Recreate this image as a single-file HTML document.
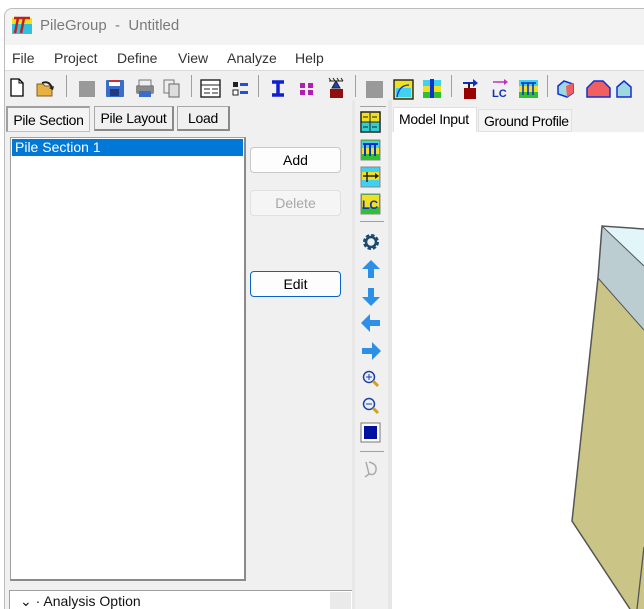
<!DOCTYPE html>
<html><head><meta charset="utf-8"><style>
*{margin:0;padding:0;box-sizing:border-box}
html,body{width:644px;height:609px;overflow:hidden}
body{background:#fff;font-family:"Liberation Sans",Arial,sans-serif;font-size:14px;color:#000;position:relative}
.a{position:absolute;white-space:nowrap}
.win{left:4px;top:8px;width:660px;height:610px;background:#f0f0f0;border:1px solid #bdbdbd;border-bottom:none;border-radius:8px 0 0 0}
.sep{position:absolute;width:1px;height:22px;background:#a0a0a0}
.btn{position:absolute;width:91px;height:26px;background:#fdfdfd;border:1px solid #c8c8c8;border-radius:4px;text-align:center;line-height:24px;font-size:14px}
.tab{position:absolute;height:25px;border:1px solid #a8a8a8;border-right:2px solid #8a8a8a;border-bottom:2px solid #8a8a8a;background:#f0f0f0;font-size:14px;text-align:center;line-height:22px;white-space:nowrap;letter-spacing:-0.3px}
</style></head><body>
<div class="a win"></div>
<div class="a" style="left:5px;top:9px;width:650px;height:36px;background:#f3f3f3;border-radius:8px 0 0 0"></div>
<svg class="a" style="left:12px;top:14px" width="20" height="20" viewBox="0 0 20 20"><rect x="0" y="9" width="20" height="11" fill="#30c0e0"/><rect x="0" y="4" width="20" height="6" fill="#f0e020"/><path d="M2 4h16M6 4l-3 15M12 4l-3 15" stroke="#c02020" stroke-width="2.5" fill="none"/></svg>
<div class="a" style="left:40px;top:17px;font-size:15px;color:#7a7a7a">PileGroup&nbsp; - &nbsp;Untitled</div>
<div class="a" style="left:5px;top:45px;width:650px;height:25px;background:#fff"></div>
<div class="a" style="left:12px;top:50px;color:#333">File</div>
<div class="a" style="left:54px;top:50px;color:#333">Project</div>
<div class="a" style="left:117px;top:50px;color:#333">Define</div>
<div class="a" style="left:178px;top:50px;color:#333">View</div>
<div class="a" style="left:227px;top:50px;color:#333">Analyze</div>
<div class="a" style="left:295px;top:50px;color:#333">Help</div>
<div class="a" style="left:5px;top:70px;width:650px;height:1px;background:#dadada"></div>
<svg class="a" style="left:0;top:72px" width="644" height="30">
<g transform="translate(0,4)">
<path d="M11 3h8l4 4v13H11z" fill="#fff" stroke="#000" stroke-width="1.3"/><path d="M19 3v4h4" fill="none" stroke="#000"/>
<path d="M37 8h6l2 2h7v10H37z" fill="#e8b040" stroke="#806020"/><path d="M42 7q8-3 10 6" stroke="#222" stroke-width="2" fill="none"/><path d="M49 12l4 2 1-4z" fill="#222"/>
<rect x="79" y="5" width="16" height="16" fill="#999"/>
<rect x="106" y="4" width="18" height="17" fill="#3a6cc8" rx="1"/><rect x="109" y="4" width="11" height="6" fill="#fff"/><rect x="109" y="4" width="11" height="2" fill="#d03030"/><rect x="110" y="13" width="9" height="7" fill="#203a80"/>
<rect x="136" y="9" width="18" height="9" fill="#8a8a8a" rx="2"/><rect x="139" y="4" width="12" height="6" fill="#eee" stroke="#777"/><rect x="139" y="15" width="12" height="6" fill="#3a6cd0"/>
<rect x="164" y="4" width="10" height="13" fill="#eee" stroke="#777"/><rect x="169" y="8" width="10" height="13" fill="#ddd" stroke="#666"/>
<rect x="201" y="4" width="19" height="17" fill="#fff" stroke="#222" stroke-width="1.4"/><path d="M201 9h19M204 13h6M212 13h6M204 17h6M212 17h6" stroke="#222"/>
<rect x="233" y="6" width="5" height="5" fill="#222"/><rect x="233" y="14" width="5" height="5" fill="#fff" stroke="#222"/><rect x="240" y="7" width="8" height="3" fill="#2050e0"/><rect x="240" y="15" width="8" height="3" fill="#2050e0"/>
<path d="M272 6h12M278 6v13M272 19h12" stroke="#1020d0" stroke-width="3.5"/>
<rect x="300" y="7" width="5" height="5" fill="#b020b0"/><rect x="308" y="7" width="5" height="5" fill="#b020b0"/><rect x="300" y="14" width="5" height="5" fill="#b020b0"/><rect x="308" y="14" width="5" height="5" fill="#b020b0"/>
<path d="M329 5h14M331 5l-2-3M335 5l-2-3M339 5l-2-3M343 5l-2-3M336 5l-4 7h8z" stroke="#222" fill="#2040c0"/><rect x="330" y="13" width="13" height="9" fill="#901010"/>
<rect x="366" y="5" width="17" height="17" fill="#999"/>
<rect x="394" y="4" width="19" height="19" fill="#f0e020" stroke="#222" stroke-width="1.4"/><rect x="396" y="12" width="15" height="9" fill="#40d0f0"/><path d="M397 21q2-12 12-12" stroke="#1030c0" fill="none" stroke-width="1.3"/>
<rect x="423" y="4" width="18" height="6" fill="#40d0f0"/><rect x="423" y="10" width="18" height="6" fill="#f0e020"/><rect x="423" y="16" width="18" height="6" fill="#30c030"/><rect x="430" y="3" width="4" height="19" fill="#1030d0"/>
<path d="M463 7h12" stroke="#1030c0" stroke-width="2"/><path d="M473 3l5 4-5 4z" fill="#1030c0"/><rect x="464" y="12" width="12" height="11" fill="#900"/><path d="M469 7v5" stroke="#222" stroke-width="2"/>
<path d="M493 6h12" stroke="#c030c0" stroke-width="1.5"/><path d="M504 3l4 3-4 3z" fill="#c030c0"/><text x="492" y="21" font-family="Liberation Sans" font-weight="bold" font-size="11" fill="#1030c0">LC</text>
<rect x="519" y="4" width="19" height="6" fill="#40d0f0"/><rect x="519" y="10" width="19" height="6" fill="#f0e020"/><rect x="519" y="16" width="19" height="6" fill="#30c030"/><path d="M521 7h15M523 7v12M528 7v12M533 7v12" stroke="#1030c0" stroke-width="1.6"/>
<path d="M558 10l6-5 9 3v9l-6 4-9-3z" fill="#a0d8e0" stroke="#1030d0" stroke-width="1.5"/><path d="M566 10l7-3v10l-6 4z" fill="#f06060"/>
<path d="M587 12l7-7 9 0 7 7v9h-23z" fill="#f06060" stroke="#1030d0" stroke-width="1.5"/>
<path d="M617 11l7-6 7 6v10h-14z" fill="#a0d8e0" stroke="#1030d0" stroke-width="1.5"/>
</g></svg>
<div class="sep" style="left:66px;top:75px"></div><div class="sep" style="left:191px;top:75px"></div><div class="sep" style="left:258px;top:75px"></div><div class="sep" style="left:355px;top:75px"></div><div class="sep" style="left:451px;top:75px"></div><div class="sep" style="left:547px;top:75px"></div>
<div class="tab" style="left:6px;top:106px;width:84px;height:26px;border:1px solid #c0c0c0;border-top:2px solid #a0a0a0;border-left:2px solid #a0a0a0;background:#f4f4f4;line-height:24px">Pile Section</div>
<div class="tab" style="left:94px;top:106px;width:80px">Pile Layout</div>
<div class="tab" style="left:177px;top:106px;width:53px">Load</div>
<div class="a" style="left:10px;top:137px;width:236px;height:444px;background:#fff;border:1px solid #a0a0a0;border-right:2px solid #8a8a8a;border-bottom:2px solid #8a8a8a"></div>
<div class="a" style="left:12px;top:139px;width:231px;height:17px;background:#0078d7;color:#fff;font-size:14px;line-height:17px;padding-left:3px">Pile Section 1</div>
<div class="btn" style="left:250px;top:147px">Add</div>
<div class="btn" style="left:250px;top:190px;color:#a8a8a8;background:#f5f5f5;border-color:#e0e0e0">Delete</div>
<div class="btn" style="left:250px;top:271px;border:1.5px solid #0a64c8">Edit</div>
<div class="a" style="left:9px;top:590px;width:344px;height:25px;background:#fff;border:1px solid #a0a0a0"></div>
<div class="a" style="left:330px;top:592px;width:21px;height:20px;background:#eaeaea"></div>
<div class="a" style="left:20px;top:593px;font-size:14px;color:#111">⌄ · Analysis Option</div>
<div class="a" style="left:352px;top:100px;width:3px;height:509px;background:#e8e8e8"></div>
<div class="a" style="left:388px;top:100px;width:4px;height:509px;background:#e6e6e6"></div>
<div class="a" style="left:360px;top:106px;width:26px;height:1px;background:#a0a0a0"></div>
<svg class="a" style="left:358px;top:106px" width="30" height="380">
<rect x="3" y="6" width="19" height="20" fill="#f0e020" stroke="#222" stroke-width="1.5"/><rect x="4" y="16" width="17" height="9" fill="#30d0d0"/><path d="M3 16h19M12 7v18M5 11h5M14 11h5M5 21h5M14 21h5" stroke="#222"/>
<rect x="3" y="34" width="19" height="20" fill="#30c030" stroke="#888"/><rect x="4" y="35" width="17" height="7" fill="#40d0f0"/><rect x="4" y="42" width="17" height="6" fill="#f0e020"/><path d="M5 38h15M7 38v12M12 38v12M17 38v12" stroke="#1030c0" stroke-width="2"/>
<rect x="3" y="61" width="19" height="20" fill="#40d0f0" stroke="#888"/><rect x="4" y="66" width="17" height="8" fill="#f0e020"/><path d="M5 70h12M9 66v10" stroke="#222" stroke-width="1.5"/><path d="M17 67l4 3-4 3z" fill="#222"/>
<rect x="3" y="88" width="19" height="20" fill="#30c030" stroke="#888"/><rect x="4" y="89" width="17" height="12" fill="#f0e020"/><text x="4" y="103" font-family="Liberation Sans" font-weight="bold" font-size="12" fill="#1030c0">LC</text>
<rect x="2" y="115" width="24" height="1" fill="#a0a0a0"/>
<circle cx="13" cy="136" r="6" fill="none" stroke="#1a4a70" stroke-width="4" stroke-dasharray="3 1.7"/><circle cx="13" cy="136" r="5" fill="none" stroke="#1a4a70" stroke-width="2.5"/>
<path d="M13 154l-9 9h6v9h6v-9h6z" fill="#2c8fe8"/>
<path d="M13 200l-9-9h6v-9h6v9h6z" fill="#2c8fe8"/>
<path d="M3 217l9-9v6h10v6h-10v6z" fill="#2c8fe8"/>
<path d="M23 245l-9-9v6h-10v6h10v6z" fill="#2c8fe8"/>
<circle cx="11" cy="271" r="5.5" fill="#e8f0ff" stroke="#2040a0" stroke-width="1.5"/><path d="M8 271h6M11 268v6" stroke="#2040a0"/><path d="M15 275l5 5" stroke="#d0a020" stroke-width="3"/>
<circle cx="11" cy="298" r="5.5" fill="#e8f0ff" stroke="#2040a0" stroke-width="1.5"/><path d="M8 298h6" stroke="#2040a0"/><path d="M15 302l5 5" stroke="#d0a020" stroke-width="3"/>
<rect x="3" y="317" width="19" height="19" fill="#fff" stroke="#777"/><rect x="6" y="320" width="13" height="13" fill="#0010a0"/>
<rect x="2" y="345" width="24" height="1" fill="#a0a0a0"/>
<path d="M8 356l3 12M11 356q8 2 7 8t-7 4M11 368l-4 3" fill="none" stroke="#aaa" stroke-width="1.5"/>
</svg>
<div class="a" style="left:393px;top:107px;width:84px;height:25px;background:#fff;border:1px solid #e0e0e0;border-bottom:none;font-size:14px;line-height:22px;padding-left:5px;letter-spacing:-0.3px">Model Input</div>
<div class="a" style="left:478px;top:109px;width:94px;height:23px;background:#f4f4f4;border:1px solid #e0e0e0;font-size:14px;line-height:22px;padding-left:5px;letter-spacing:-0.4px">Ground Profile</div>
<div class="a" style="left:392px;top:132px;width:260px;height:480px;background:#fff"></div>
<svg class="a" style="left:392px;top:132px" width="252" height="477">
<polygon points="210,94 252,97 252,134" fill="#e2f6fa"/>
<polygon points="210,94 252,134 252,198 206,146" fill="#bccdd2"/>
<polygon points="206,146 252,198 252,477 238,477 180,389" fill="#cac586"/>
<polyline points="252,97 210,94 206,146 180,389 238,477" fill="none" stroke="#555" stroke-width="1.5"/>
<line x1="210" y1="94" x2="252" y2="134" stroke="#555"/>
<line x1="206" y1="146" x2="252" y2="198" stroke="#555"/>
<line x1="245" y1="477" x2="252" y2="415" stroke="#555" stroke-width="1.3"/>
</svg>
</body></html>
